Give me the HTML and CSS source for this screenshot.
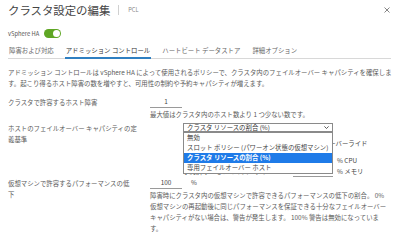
FILE: index.html
```html
<!DOCTYPE html>
<html lang="ja">
<head>
  <meta charset="UTF-8">
  <meta name="viewport" content="width=device-width, initial-scale=1.0">
  <title>クラスタ設定の編集</title>
  <link rel="stylesheet" href="styles.css">
</head>
<body>

<div class="page">
  <header class="head">
    <h1 class="title">クラスタ設定の編集</h1>
    <span class="sep"></span>
    <span class="obj">PCL</span>
    <span class="close">
      <svg width="6" height="6" viewBox="0 0 6 6"><path d="M0.5 0.5 L5.5 5.5 M5.5 0.5 L0.5 5.5" stroke="#666" stroke-width="0.8" fill="none"/></svg>
    </span>
  </header>

  <div class="ha">
    <span>vSphere HA</span>
    <span class="toggle"><span class="knob"></span></span>
  </div>

  <nav class="tabs">
    <span class="tab">障害および対応</span>
    <span class="tab active">アドミッション コントロール</span>
    <span class="tab">ハートビート データストア</span>
    <span class="tab">詳細オプション</span>
  </nav>

  <p class="intro">アドミッション コントロールは vSphere HA によって使用されるポリシーで、クラスタ内のフェイルオーバー キャパシティを確保します。起こり得るホスト障害の数を増やすと、可用性の制約や予約キャパシティが増えます。</p>

  <div class="row">
    <div class="label">クラスタで許容するホスト障害</div>
    <div class="field">
      <div class="num">1</div>
      <div class="hint">最大値はクラスタ内のホスト数より 1 つ少ない数です。</div>
    </div>
  </div>

  <div class="row row-select">
    <div class="label">ホストのフェイルオーバー キャパシティの定義基準</div>
    <div class="field field-select">
      <div class="select">
        <span>クラスタ リソースの割合 (%)</span>
        <svg width="5" height="3" viewBox="0 0 5 3"><path d="M0.4 0.4 L2.5 2.5 L4.6 0.4" stroke="#333" stroke-width="0.8" fill="none"/></svg>
        <ul class="menu">
          <li>無効</li>
          <li>スロット ポリシー (パワーオン状態の仮想マシン)</li>
          <li class="on">クラスタ リソースの割合 (%)</li>
          <li>専用フェイルオーバー ホスト</li>
        </ul>
      </div>
      <div class="check"><span class="box"></span>計算されたフェイルオーバー キャパシティをオーバーライド</div>
      <div class="cap"><span class="cap-label">予約済み CPU キャパシティ:</span><span class="cap-input">25</span><span>% CPU</span></div>
      <div class="cap"><span class="cap-label">予約済みメモリ キャパシティ:</span><span class="cap-input">25</span><span>% メモリ</span></div>
    </div>
  </div>

  <div class="row row-last">
    <div class="label">仮想マシンで許容するパフォーマンスの低<br>下</div>
    <div class="field">
      <div class="num-row"><span class="num">100</span><span class="unit">%</span></div>
      <div class="hint">障害時にクラスタ内の仮想マシンで許容できるパフォーマンスの低下の割合。 0% 仮想マシンの再起動後に同じパフォーマンスを保証できる十分なフェイルオーバー キャパシティがない場合は、警告が発生します。 100% 警告は無効になっています。</div>
    </div>
  </div>
</div>

</body>
</html>
```

FILE: styles.css
```css
body {
  margin: 0;
  background: #fff;
  font-family: "Noto Sans CJK JP", "Noto Sans", sans-serif;
  font-size: 6.4px;
  color: #5a5a5a;
}
.page {
  padding: 3px 8px 0 8px;
}
.head {
  display: flex;
  align-items: center;
  height: 14px;
}
.title {
  margin: 0;
  font-size: 11.4px;
  font-weight: normal;
  line-height: 14px;
  color: #444;
}
.sep {
  width: 1px;
  height: 10px;
  background: #d0d0d0;
  margin: 0 9px 0 8px;
}
.obj {
  font-size: 5.6px;
  color: #888;
}
.close {
  margin-left: auto;
  display: flex;
  margin-right: 1px;
}
.ha {
  display: flex;
  align-items: center;
  gap: 5px;
  height: 10px;
  margin-top: 11px;
  font-size: 5.8px;
  color: #555;
}
.toggle {
  width: 17px;
  height: 9px;
  border-radius: 4.5px;
  background: #5fa624;
  position: relative;
}
.knob {
  position: absolute;
  right: 1px;
  top: 1px;
  width: 7px;
  height: 7px;
  border-radius: 50%;
  background: #fff;
}
.tabs {
  display: flex;
  gap: 10px;
  margin-top: 7px;
  border-bottom: 1px solid #d8d8d8;
}
.tab {
  line-height: 11px;
  padding: 0 1px 1px 1px;
  margin-bottom: -1px;
  border-bottom: 2px solid transparent;
  color: #666;
}
.tab.active {
  border-bottom-color: #2f7fc1;
  color: #333;
}
.intro {
  margin: 8px -6px 0 0;
  line-height: 11px;
}
.row {
  display: flex;
  margin-top: 8px;
}
.label {
  width: 142px;
  padding-right: 8px;
  box-sizing: border-box;
  flex-shrink: 0;
  line-height: 11px;
}
.field {
  flex: 1;
}
.num {
  width: 32px;
  text-align: center;
  line-height: 10px;
  border-bottom: 1px solid #9a9a9a;
  color: #444;
}
.num-row {
  display: flex;
  align-items: flex-start;
}
.unit {
  line-height: 10px;
  margin-left: 9px;
  color: #444;
}
.hint {
  line-height: 11px;
  margin-top: 1px;
}
.row-select {
  margin-top: 3px;
}
.row-last {
  margin-top: 1px;
}
.field-select {
  margin-left: 33px;
}
.select {
  position: relative;
  width: 150px;
  height: 9px;
  box-sizing: border-box;
  border: 1px solid #8a8a8a;
  display: flex;
  align-items: center;
  justify-content: space-between;
  padding: 0 3px 0 3px;
  color: #333;
  line-height: 9px;
}
.menu {
  position: absolute;
  left: -1px;
  top: 8px;
  width: 150px;
  box-sizing: border-box;
  margin: 0;
  padding: 0;
  list-style: none;
  background: #fff;
  border: 1px solid #8a8a8a;
  z-index: 2;
}
.menu li {
  height: 10px;
  line-height: 10px;
  padding-left: 3px;
  color: #444;
}
.menu li.on {
  background: #1f7be8;
  color: #fff;
  font-weight: bold;
}
.check {
  display: flex;
  align-items: center;
  gap: 3px;
  margin-top: 6px;
  line-height: 11px;
  color: #444;
}
.box {
  width: 6px;
  height: 6px;
  border: 1px solid #888;
}
.cap {
  display: flex;
  align-items: flex-end;
  line-height: 10px;
  color: #444;
}
.check + .cap {
  margin-top: 6px;
}
.cap-label {
  width: 110px;
}
.cap-input {
  width: 40px;
  text-align: center;
  border-bottom: 1px solid #9a9a9a;
  margin-right: 4px;
}
```
